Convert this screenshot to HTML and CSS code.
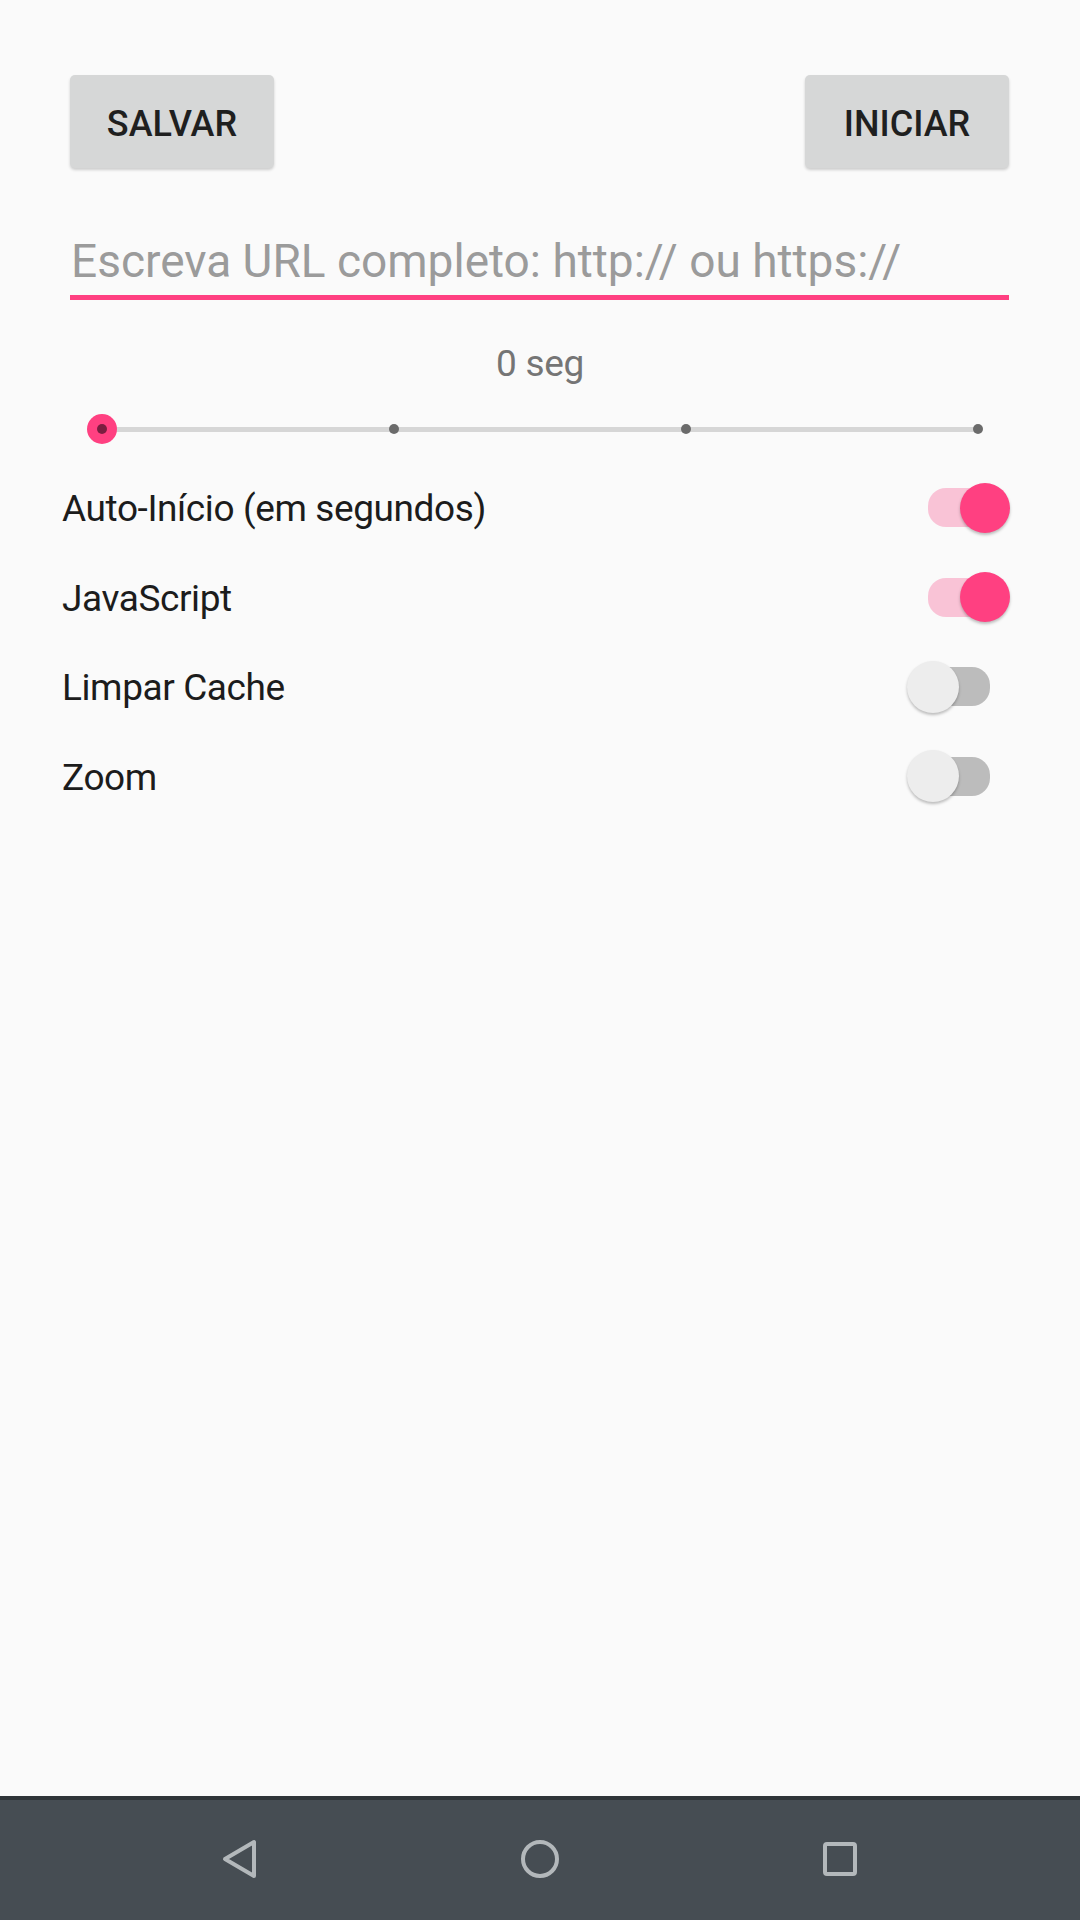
FILE: index.html
```html
<!DOCTYPE html>
<html lang="pt">
<head>
    <meta charset="UTF-8">
    <meta name="viewport" content="width=device-width, initial-scale=1.0">
    <title>Auto-Início</title>
    <link rel="stylesheet" href="styles.css">
</head>
<body>

    <div class="screen">
        <main class="content">
            <div class="actions">
                <button class="btn">SALVAR</button>
                <button class="btn">INICIAR</button>
            </div>

            <div class="url-field">
                <input type="text" placeholder="Escreva URL completo: http:// ou https://">
            </div>

            <div class="delay">
                <div class="delay-value">0 seg</div>
                <div class="slider">
                    <div class="slider-track">
                        <span class="tick"></span>
                        <span class="tick"></span>
                        <span class="tick"></span>
                        <span class="tick"></span>
                    </div>
                    <span class="slider-thumb"></span>
                </div>
            </div>

            <ul class="options">
                <li class="option">
                    <span>Auto-Início (em segundos)</span>
                    <div class="switch on"><span class="switch-track"></span><span class="switch-thumb"></span></div>
                </li>
                <li class="option">
                    <span>JavaScript</span>
                    <div class="switch on"><span class="switch-track"></span><span class="switch-thumb"></span></div>
                </li>
                <li class="option">
                    <span>Limpar Cache</span>
                    <div class="switch"><span class="switch-track"></span><span class="switch-thumb"></span></div>
                </li>
                <li class="option">
                    <span>Zoom</span>
                    <div class="switch"><span class="switch-track"></span><span class="switch-thumb"></span></div>
                </li>
            </ul>
        </main>

        <nav class="navbar">
            <svg class="nav-icon" viewBox="0 0 40 40"><polygon points="34,3 34,37 5,20"/></svg>
            <svg class="nav-icon" viewBox="0 0 40 40"><circle cx="20" cy="20" r="17"/></svg>
            <svg class="nav-icon" viewBox="0 0 40 40"><rect x="5" y="5" width="30" height="30" rx="2"/></svg>
        </nav>
    </div>

</body>
</html>
```

FILE: styles.css
```css
body {
    font-family: Roboto, "Noto Sans", sans-serif;
    background-color: #fafafa;
    margin: 0;
}
.screen {
    display: flex;
    flex-direction: column;
    height: 1920px;
}
.content {
    flex: 1;
}

.actions {
    display: flex;
    justify-content: space-between;
    padding: 75px 71px 0 70px;
}
.btn {
    width: 204px;
    height: 93px;
    background-color: #d6d7d7;
    color: #1f1f1f;
    border: none;
    border-radius: 5px;
    box-shadow: 0 2px 3px rgba(0, 0, 0, 0.18);
    font-family: Roboto, sans-serif;
    font-weight: 500;
    font-size: 36px;
    padding: 4px 0 0 0;
}

.url-field {
    margin: 66px 71px 0 70px;
}
.url-field input {
    display: block;
    width: 100%;
    box-sizing: border-box;
    height: 66px;
    padding: 0 0 7px 1px;
    font-family: Roboto, sans-serif;
    font-size: 46px;
    line-height: 54px;
    color: #333;
    border: none;
    border-bottom: 5px solid #ff4081;
    outline: none;
    background: transparent;
}
.url-field input::placeholder {
    color: #9b9b9b;
}

.delay-value {
    margin-top: 42px;
    text-align: center;
    font-size: 37px;
    line-height: 44px;
    letter-spacing: -0.3px;
    color: #757575;
}
.slider {
    position: relative;
    margin: 28px 102px 0 102px;
    height: 30px;
    display: flex;
    align-items: center;
}
.slider-track {
    flex: 1;
    height: 5px;
    background-color: #d6d6d6;
    display: flex;
    justify-content: space-between;
    align-items: center;
}
.tick {
    width: 10px;
    height: 10px;
    margin: 0 -5px;
    border-radius: 50%;
    background-color: #6b6b6b;
}
.slider-thumb {
    position: absolute;
    left: -15px;
    top: 0;
    width: 30px;
    height: 30px;
    border-radius: 50%;
    background-color: #ff4081;
    display: flex;
    align-items: center;
    justify-content: center;
}
.slider-thumb::after {
    content: "";
    width: 10px;
    height: 10px;
    border-radius: 50%;
    background-color: #7a1e40;
}

.options {
    list-style: none;
    margin: 19px 0 0 0;
    padding: 0;
}
.option {
    display: flex;
    align-items: center;
    justify-content: space-between;
    height: 89.5px;
    padding: 0 70px 0 62px;
    font-size: 37px;
    line-height: 44px;
    letter-spacing: -0.4px;
    color: #1c1c1c;
}
.option span:first-child {
    padding-top: 3px;
}

.switch {
    position: relative;
    width: 103px;
    height: 52px;
    display: flex;
    align-items: center;
}
.switch-track {
    margin-left: 21px;
    width: 62px;
    height: 36px;
    border-radius: 18px;
    background-color: #bcbcbc;
}
.switch-thumb {
    position: absolute;
    left: 0;
    top: 0;
    width: 52px;
    height: 52px;
    border-radius: 50%;
    background-color: #ededed;
    box-shadow: 0 2px 3px rgba(0, 0, 0, 0.25);
}
.switch.on .switch-track {
    background-color: #f9c3d6;
}
.switch.on .switch-thumb {
    left: auto;
    right: 0;
    top: 1px;
    width: 50px;
    height: 50px;
    background-color: #ff4081;
}

.navbar {
    height: 118px;
    border-top: 4px solid #2f3438;
    background-color: #464d53;
    display: grid;
    grid-template-columns: repeat(3, 300px);
    justify-content: center;
    align-items: center;
    justify-items: center;
    padding-bottom: 2px;
    box-sizing: content-box;
}
.nav-icon {
    width: 40px;
    height: 40px;
    fill: none;
    stroke: #b3b8bb;
    stroke-width: 4;
    stroke-linejoin: round;
}
```
